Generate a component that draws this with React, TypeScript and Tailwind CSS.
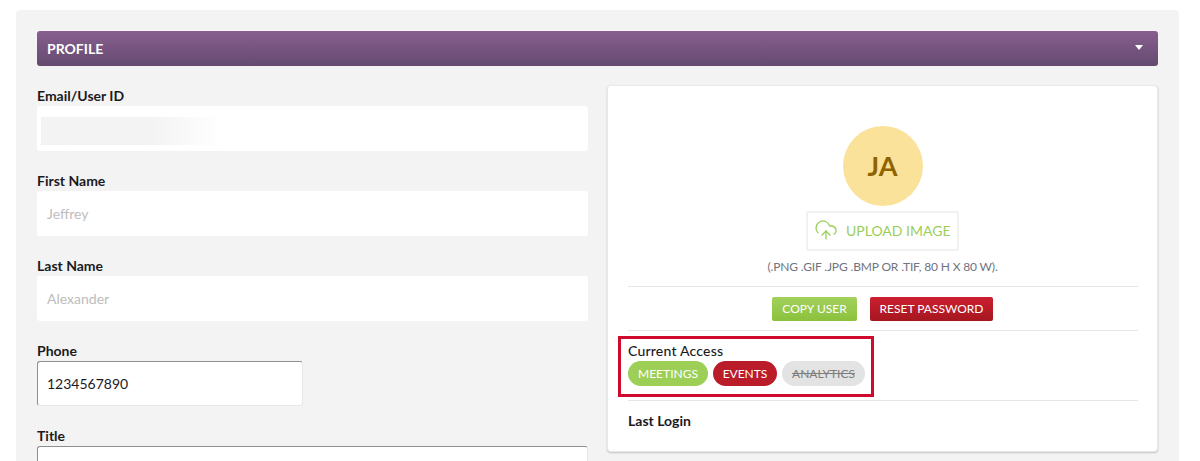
import React from "react";
import { CloudUpload } from "lucide-react";

function Label({ children }: { children: React.ReactNode }) {
  return <label className="block h-[20px] text-[14px] leading-[20px] font-bold text-[#1b1b1f]">{children}</label>;
}

function Field({ label, value }: { label: string; value: string }) {
  return (
    <div className="mb-[20px]">
      <Label>{label}</Label>
      <div className="h-[45px] rounded-[3px] bg-white px-[10px] text-[14px] leading-[45px] text-[#bdbdbd]">{value}</div>
    </div>
  );
}

export default function App() {
  return (
    <div className="h-[461px] w-[1200px] overflow-hidden bg-white pt-[10px] pl-[16px] font-['Lato',sans-serif]">
      <div className="h-[460px] w-[1163px] rounded-[4px] bg-[#f3f3f3] px-[21px] pt-[21px]">
        <div className="flex h-[35px] items-center justify-between rounded-[3px] bg-gradient-to-b from-[#885f90] to-[#644a6f] pr-[15px] pl-[10px]">
          <span className="text-[14px] font-bold text-white">PROFILE</span>
          <span className="mb-[3px] h-0 w-0 border-x-[4.5px] border-t-[5px] border-x-transparent border-t-white" />
        </div>
        <div className="mt-[19px] flex gap-[19px]">
          <div className="w-[551px] shrink-0 pt-[1px]">
            <div className="mb-[20px]">
              <Label>Email/User ID</Label>
              <div className="h-[45px] rounded-[3px] bg-white px-[4px] pt-[11px]">
                <div className="h-[28px] w-[180px] bg-gradient-to-r from-[#f3f3f3] from-60% to-white" />
              </div>
            </div>
            <Field label="First Name" value="Jeffrey" />
            <Field label="Last Name" value="Alexander" />
            <div className="mb-[20px]">
              <Label>Phone</Label>
              <div className="h-[45px] w-[266px] rounded-[3px] border border-[#e8e8e8] border-t-[#8f8f8f] border-l-[#8f8f8f] bg-white px-[9px] text-[14px] leading-[44px] text-[#1b1b1f]">1234567890</div>
            </div>
            <div>
              <Label>Title</Label>
              <div className="h-[45px] rounded-[3px] border border-[#e8e8e8] border-t-[#8f8f8f] border-l-[#8f8f8f] bg-white" />
            </div>
          </div>
          <div className="h-[367px] w-[551px] shrink-0 rounded-[4px] border border-[#e9e9e9] bg-white pt-[40px] pr-[19px] pl-[20px] shadow-[0_1px_2px_rgba(0,0,0,0.2)]">
            <div className="flex flex-col items-center pr-[1px]">
              <div className="flex h-[80px] w-[80px] items-center justify-center rounded-full bg-[#fbe29a] text-[27px] font-bold text-[#8f6400]">JA</div>
              <div className="mt-[5px] flex h-[40px] w-[153px] items-center gap-[8px] rounded-[2px] border-2 border-[#f1f1f1] pb-[2px] pl-[6px] text-[14px] text-[#9bce58]">
                <CloudUpload size={24} strokeWidth={1.3} />
                <span>UPLOAD IMAGE</span>
              </div>
              <div className="mt-[7px] h-[18px] text-[12px] leading-[18px] tracking-[-0.15px] text-[#6f7480]">(.PNG .GIF .JPG .BMP OR .TIF, 80 H X 80 W).</div>
            </div>
            <div className="mt-[10px] border-t border-[#e6e6e6]" />
            <div className="flex justify-center gap-[13px] pt-[10px] pr-[1px] pb-[9px]">
              <button className="h-[24px] w-[85px] rounded-[2px] bg-gradient-to-b from-[#a3d15c] to-[#8bc13c] text-[12px] text-white">COPY USER</button>
              <button className="h-[24px] w-[123px] rounded-[2px] bg-gradient-to-b from-[#cc1f30] to-[#a5171f] text-[12px] text-white">RESET PASSWORD</button>
            </div>
            <div className="border-t border-[#e6e6e6]" />
            <div className="relative pt-[11px]">
              <div className="h-[19px] text-[14px] leading-[18px] font-medium tracking-[0.2px] text-[#1b1b1f]">Current Access</div>
              <div className="flex gap-[5px]">
                <span className="flex h-[25px] w-[80px] items-center justify-center rounded-full bg-[#9dcf57] text-[12px] text-white">MEETINGS</span>
                <span className="flex h-[25px] w-[64px] items-center justify-center rounded-full bg-[#bb1c2a] text-[12px] text-white">EVENTS</span>
                <span className="flex h-[25px] w-[83px] items-center justify-center rounded-full bg-[#e3e3e3] text-[12px] text-[#7d7d7d] line-through">ANALYTICS</span>
              </div>
              <div className="absolute top-[5px] left-[-10px] h-[61px] w-[256px] border-[3px] border-[#cf0a2c]" />
            </div>
            <div className="mt-[14px] border-t border-[#e6e6e6]" />
            <div className="pt-[11px] text-[14px] leading-[17px] font-bold text-[#1b1b1f]">Last Login</div>
          </div>
        </div>
      </div>
    </div>
  );
}
